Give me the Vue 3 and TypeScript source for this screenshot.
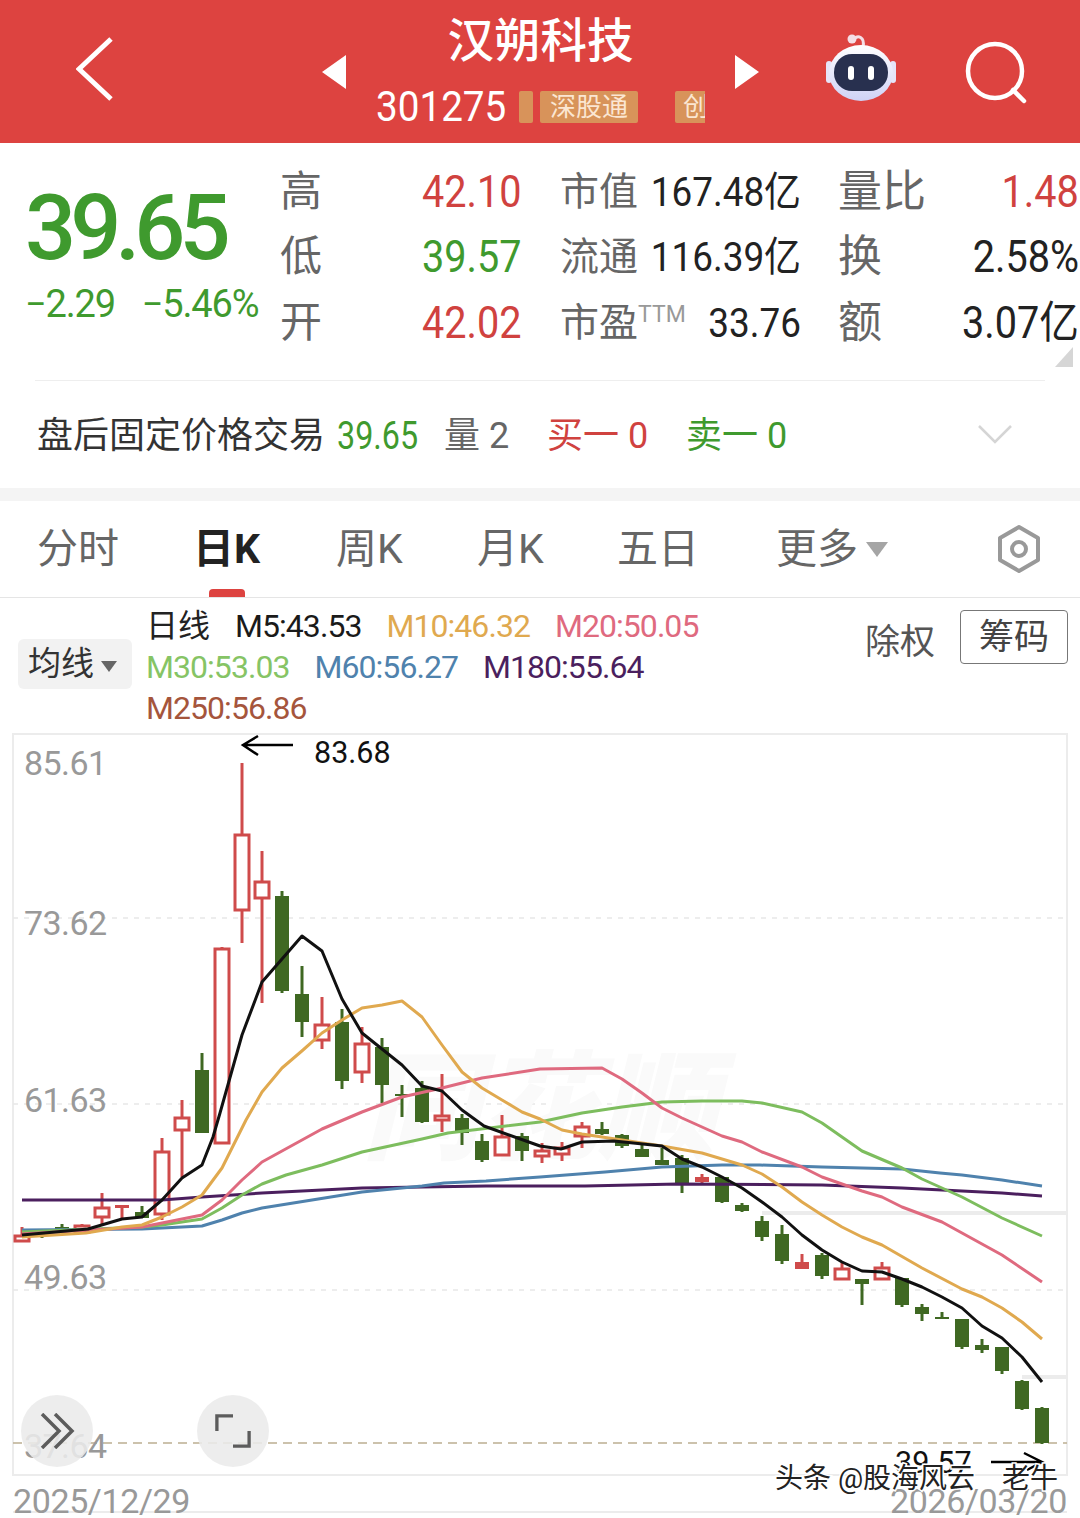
<template>
  <div class="page">
    <!-- 顶部红色标题栏 -->
    <header class="top">
      <svg class="back" viewBox="0 0 40 66"><path d="M35 4 L3 34 L35 64" /></svg>
      <svg class="prev" viewBox="0 0 24 34"><path d="M24 0 V34 L0 17 Z" /></svg>
      <div class="stock">
        <div class="stock-name">汉朔科技</div>
        <div class="stock-sub">
          <span class="code">301275</span>
          <span class="tag stub"></span>
          <span class="tag">深股通</span>
          <span class="tag wide">创业板</span>
        </div>
      </div>
      <svg class="next" viewBox="0 0 24 34"><path d="M0 0 V34 L24 17 Z" /></svg>
      <svg class="robot" viewBox="0 0 78 72">
        <defs>
          <linearGradient id="shell" x1="0" y1="0" x2="0" y2="1">
            <stop offset="0" stop-color="#ffffff" />
            <stop offset="1" stop-color="#cfd2f6" />
          </linearGradient>
        </defs>
        <path d="M31 9 C36 3 43 6 41 16" class="antenna" />
        <circle cx="30" cy="8" r="4.5" fill="#f4dfe6" />
        <rect x="4" y="30" width="6" height="22" rx="3" fill="#e6e4f8" />
        <rect x="68" y="30" width="6" height="22" rx="3" fill="#e6e4f8" />
        <ellipse cx="39" cy="42" rx="32" ry="28" fill="url(#shell)" />
        <rect x="12" y="23" width="54" height="37" rx="18" fill="#28304f" />
        <rect x="26" y="35" width="6" height="14" rx="3" fill="#fff" />
        <rect x="46" y="35" width="6" height="14" rx="3" fill="#fff" />
      </svg>
      <svg class="search" viewBox="0 0 68 68">
        <circle cx="33" cy="33" r="27" />
        <path d="M51 52 L62 63" />
      </svg>
    </header>

    <!-- 行情数据 -->
    <section class="quote">
      <div class="price">
        <div class="price-now">39.65</div>
        <div class="price-chg"><span>−2.29</span><span>−5.46%</span></div>
      </div>
      <div class="stats">
        <div v-for="s in stats" :key="s.label" class="stat" :class="s.kind">
          <span class="stat-label">{{ s.label }}<sup v-if="s.sup">{{ s.sup }}</sup></span>
          <span class="stat-value" :class="s.color">{{ s.value }}</span>
        </div>
      </div>
      <i class="corner"></i>
    </section>
    <div class="divider"></div>

    <!-- 盘后交易 -->
    <section class="after">
      <span class="after-title">盘后固定价格交易</span>
      <span class="green after-price">39.65</span>
      <span class="gray after-vol">量 2</span>
      <span class="red after-buy">买一 0</span>
      <span class="green after-sell">卖一 0</span>
      <svg class="after-more" viewBox="0 0 36 20"><path d="M2 2 L18 18 L34 2" /></svg>
    </section>
    <div class="band"></div>

    <!-- 周期切换 -->
    <nav class="tabs">
      <span v-for="t in tabs" :key="t" class="tab" :class="{ active: t === '日K' }">{{ t }}</span>
      <span class="tab">更多<i class="tri big"></i></span>
      <svg class="hex" viewBox="0 0 48 50">
        <path d="M24 3 L43 14 V36 L24 47 L5 36 V14 Z" />
        <circle cx="24" cy="25" r="7" />
      </svg>
    </nav>

    <!-- 均线图例 -->
    <section class="legend">
      <div class="ma-btn">均线<i class="tri"></i></div>
      <div class="ma-list">
        <span class="ma-name">日线</span>
        <span v-for="m in maList" :key="m.text" :style="{ color: m.color }">{{ m.text }}</span>
      </div>
      <div class="legend-right">
        <span class="fq">除权</span>
        <span class="chip">筹码</span>
      </div>
    </section>

    <!-- K线图 -->
    <div class="chart">
      <svg class="chart-svg" viewBox="0 733 1080 785" width="1080" height="785">
        <rect x="13" y="734" width="1054" height="741" class="frame" />
        <line x1="13" y1="1512" x2="1067" y2="1512" class="frame" />
        <line x1="762" y1="1213" x2="1067" y2="1213" class="patch" />
        <line x1="1022" y1="1377" x2="1067" y2="1377" class="patch" />
        <line v-for="y in [918, 1104, 1290]" :key="y" x1="13" :y1="y" x2="1067" :y2="y" class="grid" />
        <line x1="13" y1="1443" x2="1067" y2="1443" class="last" />

        <text x="362" y="1150" class="wm">同花顺</text>

        <text v-for="a in axis" :key="a.text" x="24" :y="a.y" class="axis">{{ a.text }}</text>

        <g v-for="c in candles" :key="c.x">
          <line :x1="c.x" :y1="c.high" :x2="c.x" :y2="c.low" :stroke="c.color" stroke-width="3" />
          <rect
            :x="c.x - 7" :y="c.top" width="14" :height="c.bottom - c.top"
            :fill="c.hollow ? '#fff' : c.color"
            :stroke="c.hollow ? c.color : 'none'"
            :stroke-width="c.hollow ? 3 : 0"
          />
        </g>

        <polyline v-for="l in lines" :key="l.color" :points="l.points" :stroke="l.color" class="ma" />

        <path d="M293 745 H244 M258 736 L243 745 L258 755" class="arrow" />
        <text x="314" y="763" class="note">83.68</text>
        <text x="895" y="1473" class="note">39.57</text>
        <path d="M991 1462 H1041 M1024 1453 L1042 1462 L1027 1470" class="arrow" />

        <text x="13" y="1513" class="date">2025/12/29</text>
        <text x="1067" y="1513" class="date end">2026/03/20</text>
        <text x="775" y="1488" class="mark">头条 @股海风云</text>
        <text x="1002" y="1488" class="mark">老牛</text>
      </svg>

      <button class="round left">
        <svg viewBox="0 0 36 36"><path d="M3 1 L20 18 L3 35 M16 1 L33 18 L16 35" /></svg>
      </button>
      <button class="round full">
        <svg viewBox="0 0 38 38"><path d="M19 3 H2 V19 M19 35 H36 V19" /></svg>
      </button>
    </div>
  </div>
</template>

<script setup lang="ts">
interface Stat {
  label: string
  sup?: string
  value: string
  color: string
  kind: string
}

const stats: Stat[] = [
  { label: '高', value: '42.10', color: 'red', kind: 'a' },
  { label: '市值', value: '167.48亿', color: 'dark', kind: 'b' },
  { label: '量比', value: '1.48', color: 'red', kind: 'c' },
  { label: '低', value: '39.57', color: 'green', kind: 'a' },
  { label: '流通', value: '116.39亿', color: 'dark', kind: 'b' },
  { label: '换', value: '2.58%', color: 'dark', kind: 'c' },
  { label: '开', value: '42.02', color: 'red', kind: 'a' },
  { label: '市盈', sup: 'TTM', value: '33.76', color: 'dark', kind: 'b' },
  { label: '额', value: '3.07亿', color: 'dark', kind: 'c' },
]

const tabs = ['分时', '日K', '周K', '月K', '五日']

const maList = [
  { text: 'M5:43.53', color: '#1a1a1a' },
  { text: 'M10:46.32', color: '#e0a94f' },
  { text: 'M20:50.05', color: '#df6a7f' },
  { text: 'M30:53.03', color: '#86c465' },
  { text: 'M60:56.27', color: '#4f82ad' },
  { text: 'M180:55.64', color: '#4b1f5e' },
  { text: 'M250:56.86', color: '#a5553c' },
]

const axis = [
  { text: '85.61', y: 775 },
  { text: '73.62', y: 935 },
  { text: '61.63', y: 1112 },
  { text: '49.63', y: 1289 },
  { text: '37.64', y: 1458 },
]

const RED = '#cf4b4b'
const GREEN = '#3f6822'

// 每根K线: 最高, 最低, 实体上沿, 实体下沿, 类型(h空心红 f实心红 g绿)
const raw: [number, number, number, number, string][] = [
  [1227, 1242, 1236, 1241, 'h'], [1229, 1238, 1231, 1236, 'g'], [1224, 1233, 1227, 1232, 'g'],
  [1224, 1233, 1226, 1232, 'h'], [1193, 1226, 1208, 1217, 'h'], [1205, 1218, 1205, 1208, 'f'],
  [1206, 1218, 1212, 1218, 'g'], [1138, 1220, 1152, 1214, 'h'], [1100, 1177, 1118, 1130, 'h'],
  [1053, 1133, 1070, 1133, 'g'], [947, 1144, 949, 1143, 'h'], [763, 943, 835, 910, 'h'],
  [851, 1003, 882, 898, 'h'], [891, 993, 896, 991, 'g'], [966, 1037, 994, 1022, 'g'],
  [997, 1049, 1025, 1040, 'h'], [1009, 1089, 1022, 1081, 'g'], [1027, 1083, 1044, 1072, 'h'],
  [1038, 1103, 1047, 1085, 'g'], [1085, 1117, 1094, 1096, 'g'], [1081, 1123, 1088, 1122, 'g'],
  [1074, 1132, 1116, 1120, 'h'], [1114, 1145, 1118, 1133, 'g'], [1134, 1162, 1141, 1160, 'g'],
  [1115, 1156, 1137, 1155, 'h'], [1133, 1161, 1136, 1151, 'g'], [1143, 1163, 1151, 1156, 'h'],
  [1142, 1161, 1148, 1154, 'h'], [1122, 1148, 1127, 1136, 'h'], [1122, 1135, 1129, 1134, 'g'],
  [1134, 1148, 1135, 1146, 'g'], [1145, 1157, 1149, 1157, 'g'], [1148, 1165, 1160, 1165, 'g'],
  [1155, 1193, 1158, 1183, 'g'], [1174, 1184, 1177, 1182, 'f'], [1177, 1203, 1177, 1202, 'g'],
  [1203, 1212, 1205, 1211, 'g'], [1216, 1241, 1221, 1237, 'g'], [1225, 1264, 1234, 1261, 'g'],
  [1254, 1269, 1262, 1269, 'f'], [1253, 1279, 1255, 1276, 'g'], [1263, 1280, 1269, 1279, 'h'],
  [1279, 1305, 1279, 1284, 'g'], [1262, 1280, 1268, 1279, 'h'], [1278, 1307, 1278, 1305, 'g'],
  [1304, 1321, 1307, 1314, 'g'], [1312, 1319, 1317, 1319, 'g'], [1319, 1349, 1319, 1347, 'g'],
  [1339, 1353, 1345, 1350, 'g'], [1347, 1374, 1347, 1371, 'g'], [1380, 1410, 1381, 1409, 'g'],
  [1407, 1444, 1408, 1443, 'g'],
]

const candles = raw.map(([high, low, top, bottom, type], i) => ({
  x: 22 + i * 20,
  high,
  low,
  top,
  bottom,
  hollow: type === 'h',
  color: type === 'g' ? GREEN : RED,
}))

const lines = [
  {
    color: '#4b1f5e',
    points: '22,1200 162,1200 202,1197 262,1193 362,1188 422,1187 486,1186 585,1186 678,1184 822,1185 902,1188 962,1191 1002,1193 1042,1196',
  },
  {
    color: '#4f82ad',
    points: '22,1230 142,1229 202,1226 222,1220 242,1213 262,1208 362,1192 422,1186 444,1183 486,1181 540,1177 605,1172 662,1167 722,1165 760,1165 822,1167 902,1169 940,1173 962,1175 1002,1180 1042,1186',
  },
  {
    color: '#7dbd5e',
    points: '22,1232 142,1227 162,1225 202,1219 222,1208 242,1195 262,1184 286,1175 322,1165 362,1152 422,1139 448,1133 540,1122 582,1113 622,1107 662,1102 702,1101 742,1101 762,1103 802,1112 822,1123 842,1137 862,1151 902,1168 922,1179 962,1197 1002,1218 1042,1236',
  },
  {
    color: '#df6a7f',
    points: '22,1234 142,1227 162,1223 202,1215 222,1200 242,1180 262,1162 282,1151 322,1129 362,1112 402,1097 442,1088 482,1078 540,1069 602,1068 622,1079 642,1093 662,1108 682,1118 722,1136 742,1142 762,1152 802,1167 822,1177 862,1191 882,1197 902,1207 942,1222 962,1233 1002,1255 1042,1282',
  },
  {
    color: '#e0a94f',
    points: '22,1237 86,1233 122,1227 142,1225 162,1217 182,1207 202,1195 222,1168 246,1120 262,1092 282,1068 303,1050 322,1033 342,1020 362,1008 382,1005 402,1001 422,1017 442,1045 462,1072 482,1088 502,1100 522,1112 540,1119 562,1130 582,1134 622,1140 662,1146 702,1153 742,1165 762,1174 782,1187 802,1202 822,1215 842,1227 862,1237 882,1245 922,1268 962,1289 982,1297 1002,1308 1022,1322 1042,1339',
  },
  {
    color: '#111111',
    points: '22,1235 88,1229 122,1219 142,1217 162,1200 182,1178 202,1165 213,1137 220,1113 242,1035 262,982 302,936 322,951 342,999 362,1033 402,1065 422,1086 442,1091 462,1110 484,1126 540,1146 561,1149 582,1142 614,1141 662,1146 682,1159 702,1167 722,1177 742,1188 762,1202 782,1217 802,1235 822,1250 842,1262 862,1271 882,1272 902,1279 922,1287 942,1297 962,1308 982,1326 1002,1338 1022,1357 1042,1382',
  },
]
</script>

<style>
body { margin: 0; background: #fff; }
</style>

<style scoped>
.page {
  width: 1080px;
  height: 1518px;
  overflow: hidden;
  background: #fff;
  font-family: Roboto, "Noto Sans CJK SC", sans-serif;
  color: #222;
}

/* 顶部栏 */
.top {
  display: flex;
  align-items: center;
  height: 143px;
  padding-left: 76px;
  box-sizing: border-box;
  background: #dd4340;
}
.back { width: 40px; height: 66px; margin-top: -8px; fill: none; stroke: #fff; stroke-width: 5; }
.prev { width: 24px; height: 34px; margin-left: 206px; fill: #fff; }
.next { width: 24px; height: 34px; margin-left: 30px; fill: #fff; }
.stock { width: 329px; margin-left: 30px; color: #fff; align-self: flex-start; }
.stock-name {
  height: 62px;
  line-height: 62px;
  margin-top: 10px;
  text-align: center;
  font-size: 46.5px;
  font-weight: 500;
}
.stock-sub {
  display: flex;
  align-items: center;
  height: 36px;
  margin-top: 17px;
  overflow: hidden;
}
.code {
  width: 130px;
  flex-shrink: 0;
  font-size: 42px;
  line-height: 36px;
  transform: scaleX(0.92);
  transform-origin: left;
}
.tag {
  flex-shrink: 0;
  width: 98px;
  height: 32px;
  margin-left: 7px;
  line-height: 32px;
  text-align: center;
  font-size: 26px;
  color: #fbe6d2;
  background: #d8935a;
  border-radius: 2px;
}
.tag.stub { width: 14px; margin-left: 13px; }
.tag.wide { margin-left: 37px; text-align: left; padding-left: 8px; }
.robot { width: 78px; height: 72px; margin-left: 63px; margin-top: -9px; }
.antenna { fill: none; stroke: #f4dfe6; stroke-width: 3; }
.search { width: 68px; height: 68px; margin-left: 62px; fill: none; stroke: #fff; stroke-width: 4.5; stroke-linecap: round; }

/* 行情 */
.quote {
  position: relative;
  display: flex;
  height: 237px;
  box-sizing: border-box;
  padding-top: 16px;
}
.price { width: 280px; padding-left: 25px; box-sizing: border-box; }
.price-now {
  margin-top: 20px;
  font-size: 90px;
  line-height: 100px;
  font-weight: 500;
  letter-spacing: -6px;
  color: #3f9a2e;
}
.price-chg {
  display: flex;
  gap: 27px;
  margin-top: 3px;
  font-size: 38px;
  line-height: 44px;
  letter-spacing: -1.2px;
  color: #3f9a2e;
  white-space: nowrap;
}
.stats {
  display: grid;
  grid-template-columns: 242px 241px 240px;
  grid-auto-rows: 65.5px;
  column-gap: 38px;
  align-items: center;
}
.stat { display: flex; justify-content: space-between; align-items: center; white-space: nowrap; }
.stat-label { color: #666; font-size: 39px; line-height: 50px; }
.stat.a .stat-label { font-size: 42px; }
.stat.c .stat-label { font-size: 44px; margin-left: -1px; }
.stat-label sup { font-size: 23px; color: #999; vertical-align: 14px; line-height: 0; }
/* 行情数字是窄体,横向压缩 */
.stat-value {
  display: inline-block;
  margin-left: -12px;
  font-size: 44px;
  line-height: 50px;
  transform: scaleX(0.9);
  transform-origin: right;
}
.stat.b .stat-value { font-size: 41px; }
.red { color: #d0423f; }
.green { color: #3f9a2e; }
.dark { color: #222; }
.gray { color: #666; }
.corner {
  position: absolute;
  right: 7px;
  bottom: 13px;
  width: 0;
  height: 0;
  border-left: 18px solid transparent;
  border-bottom: 20px solid #d6d6d6;
}
.divider { height: 1px; margin: 0 35px; background: #eee; }

/* 盘后 */
.after {
  display: flex;
  align-items: center;
  height: 107px;
  padding: 2px 0 0 37px;
  box-sizing: border-box;
  font-size: 36px;
  line-height: 44px;
  white-space: nowrap;
}
.after-title { width: 285px; color: #333; }
.after-price {
  margin-left: 15px;
  width: 81px;
  font-size: 38px;
  transform: scaleX(0.85);
  transform-origin: left;
}
.after-vol { margin-left: 26px; width: 65px; }
.after-buy { margin-left: 38px; width: 100px; }
.after-sell { margin-left: 39px; width: 100px; }
.after-more { width: 36px; height: 20px; margin-left: 191px; margin-top: -4px; fill: none; stroke: #d5d5d5; stroke-width: 2.5; }
.band { height: 13px; background: #f4f4f4; }

/* 周期 */
.tabs {
  position: relative;
  display: grid;
  grid-template-columns: 159px 140px 141px 140px 159px 221px auto;
  align-items: center;
  height: 96px;
  padding-left: 37px;
  box-sizing: border-box;
}
.tab { font-size: 41px; line-height: 50px; color: #666; white-space: nowrap; }
.tab.active { font-weight: 700; color: #222; position: relative; margin-left: -3px; }
.tab.active::after {
  content: '';
  position: absolute;
  left: 16px;
  bottom: -23px;
  width: 36px;
  height: 8px;
  border-radius: 4px 4px 0 0;
  background: #dd4340;
}
.tri {
  display: inline-block;
  margin-left: 7px;
  vertical-align: middle;
  border-left: 8px solid transparent;
  border-right: 8px solid transparent;
  border-top: 11px solid #666;
}
.tri.big {
  border-left-width: 11px;
  border-right-width: 11px;
  border-top: 15px solid #a5a5a5;
  margin-left: 8px;
  margin-top: -6px;
}
.hex { width: 48px; height: 50px; margin-left: -2px; fill: none; stroke: #999; stroke-width: 4; stroke-linejoin: round; }

/* 图例 */
.legend {
  display: flex;
  height: 136px;
  box-sizing: border-box;
  padding-left: 18px;
  padding-right: 12px;
  border-top: 1px solid #e5e5e5;
}
.ma-btn {
  width: 114px;
  height: 50px;
  margin-top: 41px;
  line-height: 50px;
  padding-left: 10px;
  box-sizing: border-box;
  font-size: 33px;
  color: #333;
  background: #f2f2f2;
  border-radius: 6px;
  white-space: nowrap;
}
.ma-list {
  display: flex;
  flex-wrap: wrap;
  align-content: flex-start;
  column-gap: 25px;
  width: 560px;
  margin-left: 14px;
  padding-top: 8px;
  font-size: 32px;
  line-height: 41px;
  letter-spacing: -0.95px;
  white-space: nowrap;
}
.ma-name { letter-spacing: 0; color: #222; }
.legend-right { display: flex; align-items: flex-start; margin-left: auto; }
.fq { margin-top: 22px; font-size: 35px; line-height: 46px; color: #555; }
.chip {
  width: 108px;
  height: 54px;
  margin-top: 12px;
  margin-left: 25px;
  line-height: 54px;
  box-sizing: border-box;
  text-align: center;
  font-size: 35px;
  color: #444;
  border: 1px solid #777;
  border-radius: 4px;
}

/* K线图 */
.chart { position: relative; height: 785px; }
.chart-svg { display: block; font-family: Roboto, "Noto Sans CJK SC", sans-serif; }
.frame { fill: none; stroke: #ececec; stroke-width: 2; }
.patch { stroke: #ececec; stroke-width: 4; }
.grid { stroke: #e8e8e8; stroke-width: 1.5; stroke-dasharray: 5 6; }
.last { stroke: #bcae91; stroke-width: 1.5; stroke-dasharray: 9 6; }
.wm { font-size: 118px; font-weight: 900; font-style: italic; fill: #fafafa; }
.axis { font-size: 34px; fill: #999; letter-spacing: -0.6px; }
.ma { fill: none; stroke-width: 3; stroke-linejoin: round; }
.arrow { fill: none; stroke: #000; stroke-width: 2.5; }
.note { font-size: 30.5px; fill: #111; }
.date { font-size: 34px; fill: #999; letter-spacing: -0.4px; }
.date.end { text-anchor: end; }
.mark { font-size: 28px; fill: #222; stroke: #fff; stroke-width: 3; paint-order: stroke; }
.round {
  position: absolute;
  top: 662px;
  width: 72px;
  height: 72px;
  padding: 0;
  border: none;
  border-radius: 50%;
  background: rgba(234, 234, 234, 0.88);
}
.round.left { left: 21px; }
.round.full { left: 197px; }
.round svg { display: block; margin: 18px; width: 36px; height: 36px; fill: none; stroke: #5c5c5c; stroke-width: 3.5; }
</style>
